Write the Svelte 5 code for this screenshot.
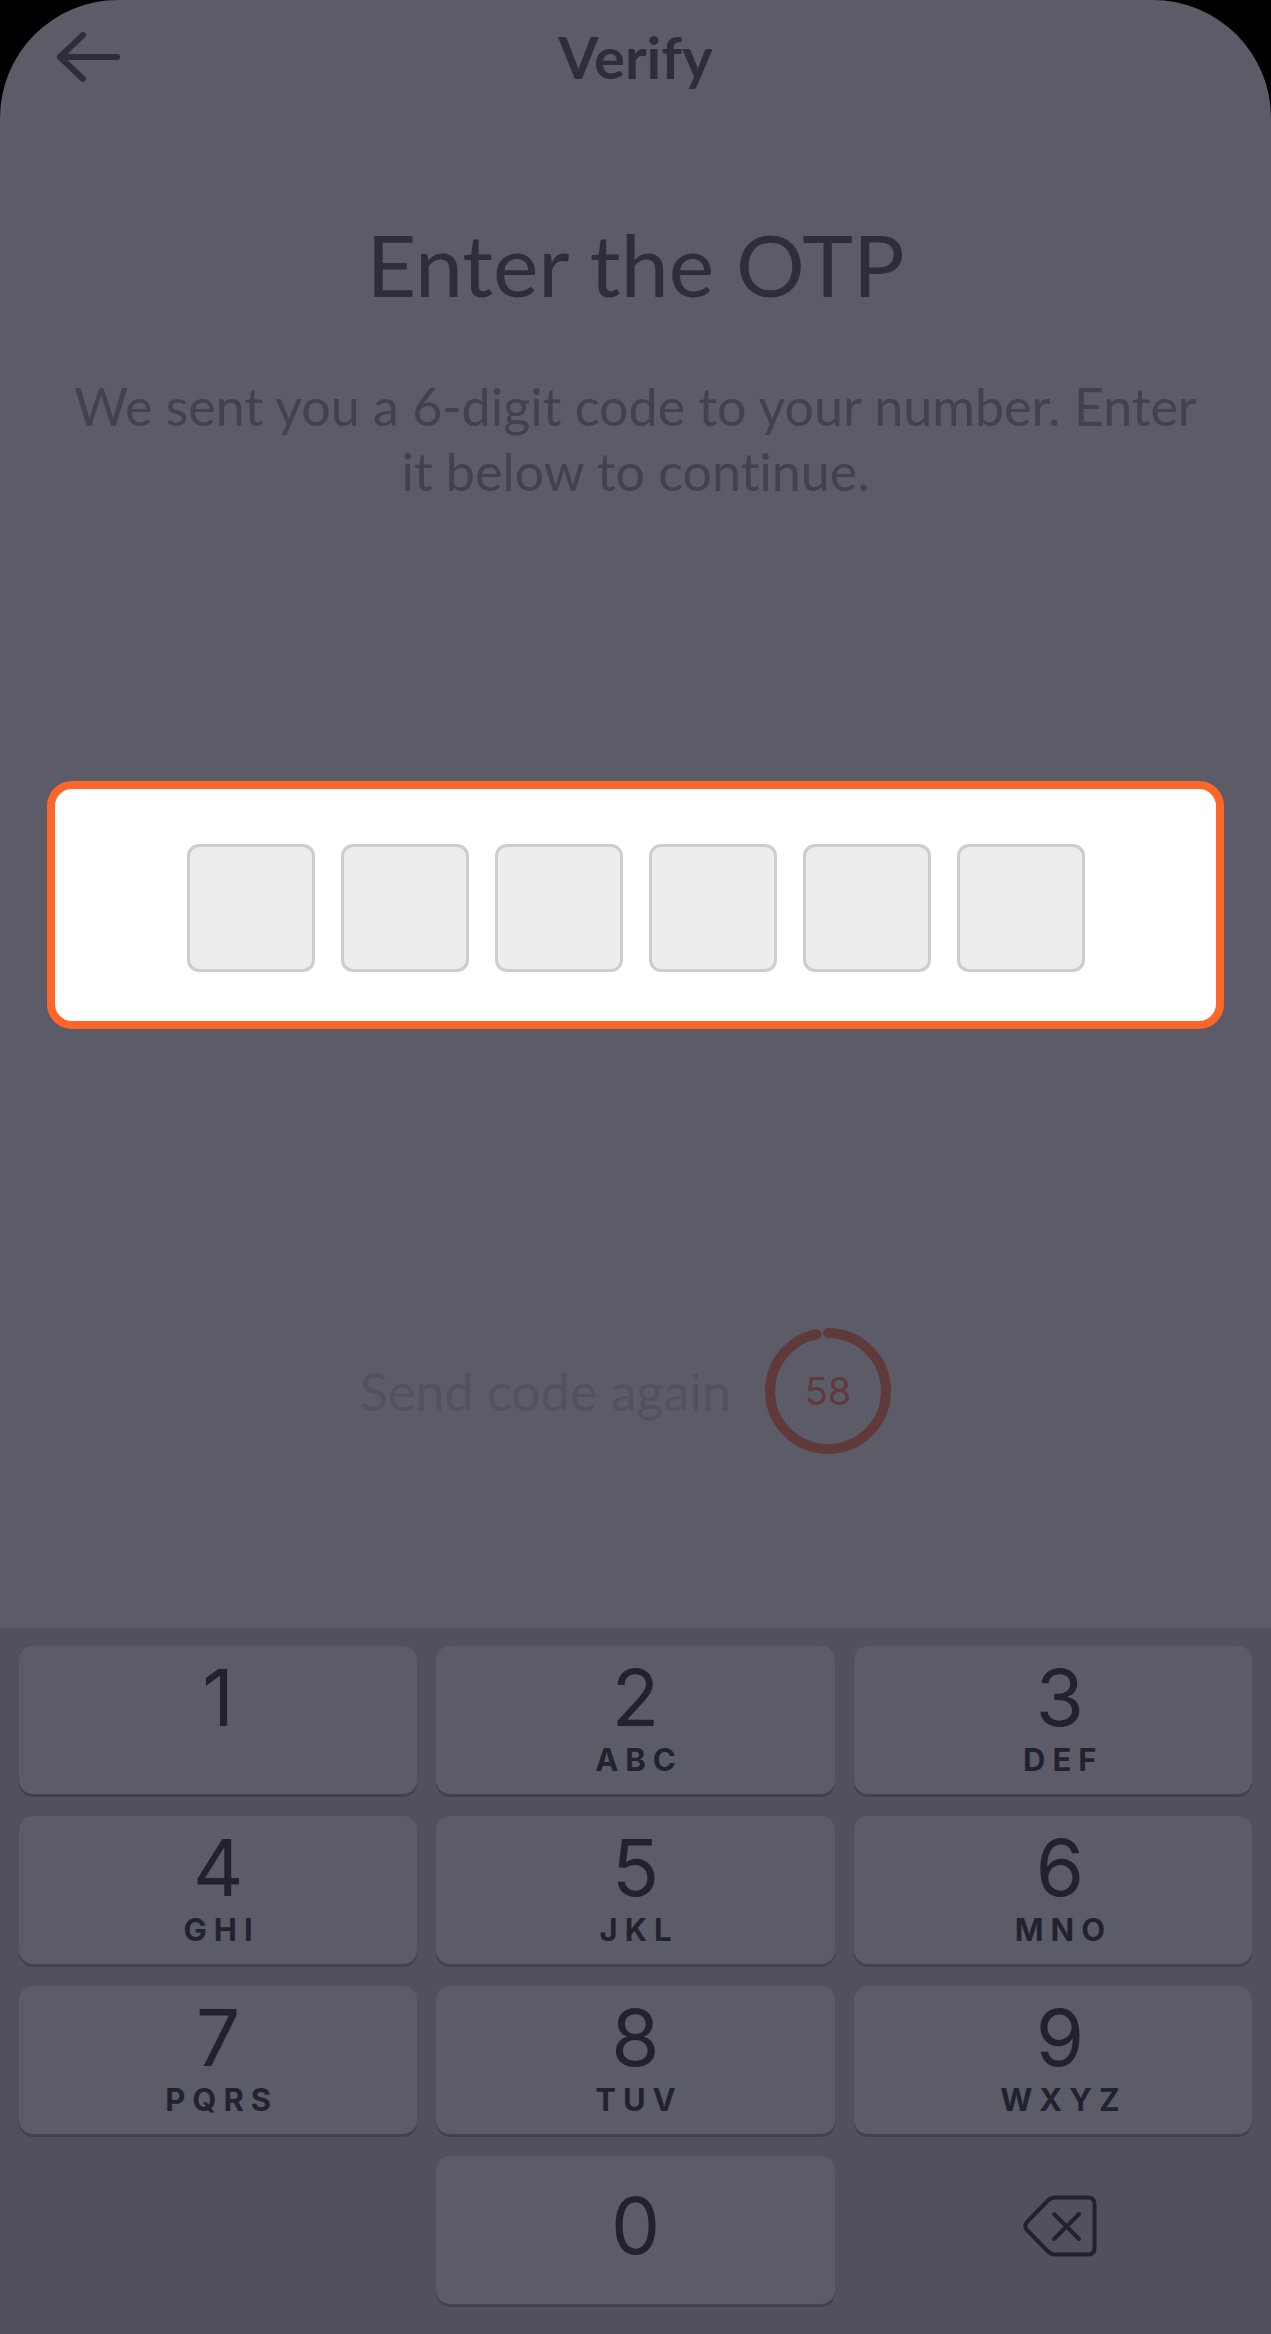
<script lang="ts">
  const CODE_LENGTH = 6;
  const RESEND_SECONDS = 60;
  const RING_RADIUS = 58;
  const RING_LENGTH = 2 * Math.PI * RING_RADIUS;

  const keys = [
    { digit: '1', letters: '' },
    { digit: '2', letters: 'ABC' },
    { digit: '3', letters: 'DEF' },
    { digit: '4', letters: 'GHI' },
    { digit: '5', letters: 'JKL' },
    { digit: '6', letters: 'MNO' },
    { digit: '7', letters: 'PQRS' },
    { digit: '8', letters: 'TUV' },
    { digit: '9', letters: 'WXYZ' }
  ];

  let code: string[] = $state(Array(CODE_LENGTH).fill(''));
  let secondsLeft = $state(58);
  let ringFilled = $derived((secondsLeft / RESEND_SECONDS) * RING_LENGTH);

  function pressDigit(digit: string) {
    const next = code.indexOf('');
    if (next !== -1) code[next] = digit;
  }

  function pressDelete() {
    for (let i = CODE_LENGTH - 1; i >= 0; i--) {
      if (code[i]) {
        code[i] = '';
        return;
      }
    }
  }

  function resend() {
    code = Array(CODE_LENGTH).fill('');
    secondsLeft = RESEND_SECONDS;
  }
</script>

<div class="screen">
  <header class="topbar">
    <button class="back" aria-label="Back">
      <svg width="64" height="56" viewBox="0 0 64 56" fill="none" stroke="currentColor" stroke-width="6" stroke-linecap="round" stroke-linejoin="round">
        <path d="M61 28H4"></path>
        <path d="M27 6L4 28l23 22"></path>
      </svg>
    </button>
    <h2 class="topbar-title">Verify</h2>
  </header>

  <main class="content">
    <h1 class="title">Enter the OTP</h1>
    <p class="hint">We sent you a 6-digit code to your number. Enter it below to continue.</p>

    <div class="code-card" role="group" aria-label="One-time code">
      {#each code as _, i}
        <input
          class="code-box"
          type="text"
          inputmode="numeric"
          maxlength="1"
          aria-label={`Digit ${i + 1}`}
          bind:value={code[i]}
        />
      {/each}
    </div>

    <div class="resend">
      <button class="resend-button" disabled={secondsLeft > 0} onclick={resend}>Send code again</button>
      <div class="timer">
        <svg width="126" height="126" viewBox="0 0 126 126" fill="none">
          <circle
            cx="63"
            cy="63"
            r={RING_RADIUS}
            stroke="currentColor"
            stroke-width="10"
            stroke-linecap="round"
            stroke-dasharray={`${ringFilled} ${RING_LENGTH}`}
            transform="rotate(-90 63 63)"
          ></circle>
        </svg>
        <span class="timer-value">{secondsLeft}</span>
      </div>
    </div>
  </main>

  <div class="keypad">
    {#each keys as key}
      <button class="key" onclick={() => pressDigit(key.digit)}>
        <span class="key-digit">{key.digit}</span>
        <span class="key-letters">{key.letters}</span>
      </button>
    {/each}
    <button class="key key-zero" onclick={() => pressDigit('0')}>
      <span class="key-digit">0</span>
    </button>
    <button class="key key-delete" aria-label="Delete" onclick={pressDelete}>
      <svg width="74" height="62" viewBox="0 0 74 62" fill="none" stroke="currentColor" stroke-width="4" stroke-linecap="round" stroke-linejoin="round">
        <path d="M32 2.500H65Q71.500 2.500 71.500 9V53Q71.500 59.500 65 59.500H32Q28 59.500 24.500 56L4 35Q0.500 31 4 27L24.500 6Q28 2.500 32 2.500Z"></path>
        <path d="M31 19l25 25M56 19L31 44"></path>
      </svg>
    </button>
  </div>
</div>

<style>
  :global(body) {
    margin: 0;
    background: #000000;
  }

  .screen {
    display: flex;
    flex-direction: column;
    min-height: 100vh;
    overflow: hidden;
    border-radius: 118px 118px 0 0;
    background: #5c5c68;
    color: #2d2d3b;
    font-family: Lato, 'Open Sans', sans-serif;
    font-variant-ligatures: none;
  }

  button {
    padding: 0;
    border: none;
    background: none;
    color: inherit;
    font: inherit;
    cursor: pointer;
  }

  .topbar {
    display: grid;
    grid-template-columns: 1fr auto 1fr;
    align-items: center;
    height: 114px;
    padding: 0 56px;
  }

  .back {
    display: flex;
    justify-self: start;
  }

  .topbar-title {
    margin: 0;
    font-size: 58px;
    line-height: 64px;
    font-weight: 700;
  }

  .content {
    display: flex;
    flex: 1;
    flex-direction: column;
    padding: 96px 47px 0;
  }

  .title {
    margin: 0;
    font-size: 86px;
    line-height: 108px;
    font-weight: 400;
    text-align: center;
  }

  .hint {
    margin: 56px 0 0;
    padding: 0 24px;
    color: #41414f;
    font-size: 52px;
    line-height: 65px;
    text-align: center;
  }

  .code-card {
    display: flex;
    justify-content: center;
    gap: 26px;
    margin-top: 277px;
    padding: 55px 0 49px;
    border: 8px solid #fd6628;
    border-radius: 25px;
    background: #ffffff;
  }

  .code-box {
    box-sizing: border-box;
    width: 128px;
    height: 128px;
    padding: 0;
    border: 3px solid #cdcdcd;
    border-radius: 12px;
    background: #ededed;
    color: #2d2d3b;
    font-family: inherit;
    font-size: 56px;
    text-align: center;
  }

  .resend {
    display: flex;
    align-items: center;
    justify-content: center;
    gap: 34px;
    margin: 299px 0 48px;
    padding-right: 20px;
  }

  .resend-button {
    color: #52525f;
    font-size: 52px;
    line-height: 65px;
  }

  .timer {
    display: grid;
    place-items: center;
    color: #603a3a;
  }

  .timer svg,
  .timer-value {
    grid-area: 1 / 1;
  }

  .timer-value {
    font-family: Inter, sans-serif;
    font-size: 38px;
    line-height: 48px;
  }

  .keypad {
    display: grid;
    grid-template-columns: repeat(3, 1fr);
    grid-auto-rows: 148px;
    gap: 22px 19px;
    padding: 18px 19px 30px;
    background: #51515d;
    color: #22222f;
    font-family: Inter, sans-serif;
  }

  .key {
    display: flex;
    flex-direction: column;
    align-items: center;
    padding-top: 14px;
    border-radius: 14px;
    background: #5c5c68;
    box-shadow: 0 3px 0 #42424e;
  }

  .key:nth-child(3n) {
    padding-left: 14px;
  }

  .key-digit {
    font-size: 78px;
    line-height: 76px;
  }

  /* left padding evens out the tracking after the last letter */
  .key-letters {
    height: 40px;
    margin-top: 4px;
    padding-left: 7px;
    font-size: 31px;
    line-height: 40px;
    font-weight: 700;
    letter-spacing: 7px;
  }

  .key-zero {
    grid-column: 2;
    justify-content: center;
    padding: 0 0 8px;
  }

  .key-delete {
    justify-content: center;
    padding: 0 0 8px 14px;
    background: none;
    box-shadow: none;
  }
</style>
